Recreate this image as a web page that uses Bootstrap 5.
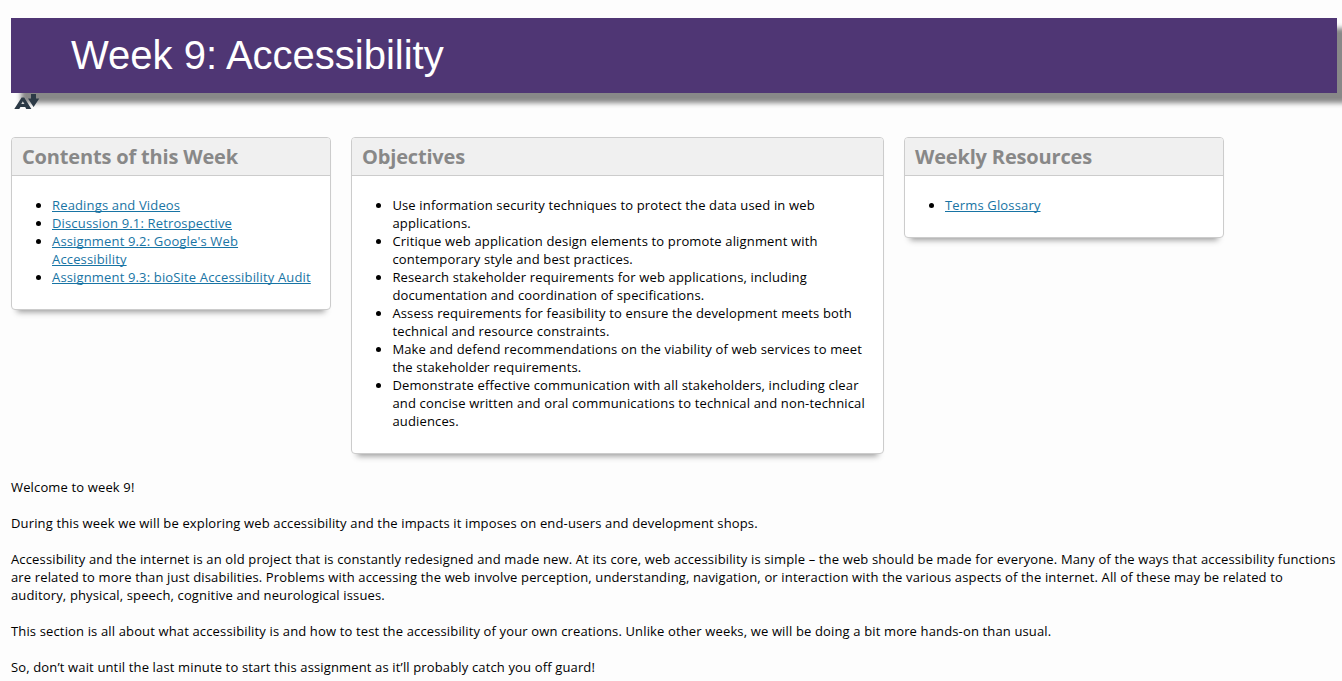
<!DOCTYPE html>
<html lang="en">
<head>
<meta charset="utf-8">
<title>Week 9: Accessibility</title>
<link href="https://cdn.jsdelivr.net/npm/bootstrap@5.3.0/dist/css/bootstrap.min.css" rel="stylesheet">
<style>
body{background:#fdfdfd;color:#000;font:13px/18px "Open Sans","Noto Sans",sans-serif;letter-spacing:.155px;overflow:hidden}
.page{padding:18px 5px 0 11px}
.banner{height:75px;padding-left:60px;background:#4f3674;box-shadow:10px 10px 5px #888}
.banner h1{font:40px/75px "Liberation Sans",Arial,sans-serif;letter-spacing:0;color:#fff}
.reader{height:44px;padding:1px 0 0 3px;position:relative}
.panels{gap:20px;margin-bottom:24px}
.panel{border:1px solid #ccc;border-radius:4px;box-shadow:0 8px 6px -6px #999;width:320px}
.panel.wide{width:533px}
.panel .card-header{height:38px;padding:0 10px;background:#f0f0f0;border-bottom:1px solid #ccc;border-radius:3px 3px 0 0}
.panel h2{font-size:20px;line-height:37px;font-weight:700;letter-spacing:-.17px;color:#888}
.panel .card-body{padding:20px 15px 23px 0}
.panel ul{padding-left:40px}
.panel.wide ul{padding-left:40.4px}
.panel a{color:#1874a4;letter-spacing:.155px;text-underline-offset:1px;text-decoration-thickness:1px;text-decoration-skip-ink:none}
.intro{letter-spacing:.143px}
.intro p{margin:0 -5px 18px 0}
</style>
</head>
<body>
<main class="page">
  <header class="banner"><h1 class="m-0 text-nowrap">Week 9: Accessibility</h1></header>
  <div class="reader">
    <svg class="d-block" width="26" height="16" viewBox="0 0 26 16" aria-label="Alternative formats"><g fill="#2c3a46"><path fill-rule="evenodd" d="M7.600 3.500h2.600L17.400 15h-5.200l-1-2H6.400L5.300 15H.3zM8.800 7.300L7.300 10h3.200z"/><path d="M17 0h5v4.500h3.300L19.600 13 14 4.500h3z"/></g></svg>
  </div>
  <div class="panels d-flex align-items-start">
    <section class="card panel">
      <div class="card-header"><h2 class="m-0">Contents of this Week</h2></div>
      <div class="card-body"><ul class="m-0">
        <li><a href="#">Readings and Videos</a></li>
        <li><a href="#">Discussion 9.1: Retrospective</a></li>
        <li><a href="#">Assignment 9.2: Google's Web<br>Accessibility</a></li>
        <li><a href="#">Assignment 9.3: bioSite Accessibility Audit</a></li>
      </ul></div>
    </section>
    <section class="card panel wide">
      <div class="card-header"><h2 class="m-0">Objectives</h2></div>
      <div class="card-body"><ul class="m-0">
        <li>Use information security techniques to protect the data used in web applications.</li>
        <li>Critique web application design elements to promote alignment with contemporary style and best practices.</li>
        <li>Research stakeholder requirements for web applications, including documentation and coordination of specifications.</li>
        <li>Assess requirements for feasibility to ensure the development meets both technical and resource constraints.</li>
        <li>Make and defend recommendations on the viability of web services to meet the stakeholder requirements.</li>
        <li>Demonstrate effective communication with all stakeholders, including clear and concise written and oral communications to technical and non-technical audiences.</li>
      </ul></div>
    </section>
    <section class="card panel">
      <div class="card-header"><h2 class="m-0">Weekly Resources</h2></div>
      <div class="card-body"><ul class="m-0"><li><a href="#">Terms Glossary</a></li></ul></div>
    </section>
  </div>
  <div class="intro">
    <p>Welcome to week 9!</p>
    <p>During this week we will be exploring web accessibility and the impacts it imposes on end-users and development shops.</p>
    <p>Accessibility and the internet is an old project that is constantly redesigned and made new. At its core, web accessibility is simple – the web should be made for everyone. Many of the ways that accessibility functions are related to more than just disabilities. Problems with accessing the web involve perception, understanding, navigation, or interaction with the various aspects of the internet. All of these may be related to<br>auditory, physical, speech, cognitive and neurological issues.</p>
    <p>This section is all about what accessibility is and how to test the accessibility of your own creations. Unlike other weeks, we will be doing a bit more hands-on than usual.</p>
    <p class="mb-0">So, don’t wait until the last minute to start this assignment as it’ll probably catch you off guard!</p>
  </div>
</main>
<script src="https://cdn.jsdelivr.net/npm/bootstrap@5.3.0/dist/js/bootstrap.bundle.min.js"></script>
</body>
</html>
